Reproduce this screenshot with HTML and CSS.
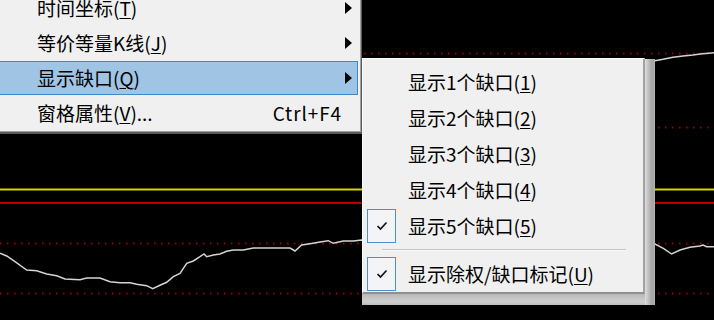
FILE: index.html
```html
<!DOCTYPE html>
<html lang="zh-CN">
<head>
<meta charset="utf-8">
<title>显示缺口</title>
<link rel="stylesheet" href="styles.css">
</head>
<body>
<div class="stage">
  <svg class="chart" width="714" height="320" viewBox="0 0 714 320">
    <g class="dots">
      <line x1="0" y1="53.5" x2="714" y2="53.5"/>
      <line x1="0" y1="127.5" x2="714" y2="127.5"/>
      <line x1="0" y1="243.5" x2="714" y2="243.5"/>
      <line x1="0" y1="293.5" x2="714" y2="293.5"/>
    </g>
    <line class="yellow" x1="0" y1="189.5" x2="714" y2="189.5"/>
    <line class="red" x1="0" y1="203" x2="714" y2="203"/>
    <polyline class="price" points="0,253.3 6.7,256 15,261.7 26.7,270 36.7,270.7 46.7,274 56.7,275.7 65,279 80,279.7 86.7,278 100,278 110,281.7 120,282.7 130,282.7 136.7,284.3 146.7,285.7 152.7,288.7 160,285.3 166.7,282.3 173.3,276.7 180,273.3 186.7,263.3 193.3,261 200,256.7 204,254 206.7,256.7 213.3,255 220,254 226.7,251.3 233.3,250 243.3,250 253.3,248 266.7,248 290,248 295,251 301.7,245 310,243.7 320,242 328.3,240.7 333.3,243.3 343.3,241 353.3,241 361.7,240 655,244 663.3,248.3 671.7,254 680,250 690,247.3 700,246 703,245 706.7,246.7 714,246.7"/>
    <polyline class="price" points="600,66 655,60.7 663,59.3 673,57.3 683,56 693,55 700,54 714,52.7"/>
  </svg>

  <div class="menu main">
    <div class="item"><span class="label">时间坐标(<u>T</u>)</span><span class="key"></span><span class="arrow"></span></div>
    <div class="item"><span class="label">等价等量K线(<u>J</u>)</span><span class="key"></span><span class="arrow"></span></div>
    <div class="item active"><span class="label">显示缺口(<u>Q</u>)</span><span class="key"></span><span class="arrow"></span></div>
    <div class="item"><span class="label">窗格属性(<u>V</u>)...</span><span class="key">Ctrl+F4</span><span class="noarrow"></span></div>
  </div>

  <div class="menu sub">
    <div class="sitem"><span class="check"></span><span class="label">显示1个缺口(<u>1</u>)</span></div>
    <div class="sitem"><span class="check"></span><span class="label">显示2个缺口(<u>2</u>)</span></div>
    <div class="sitem"><span class="check"></span><span class="label">显示3个缺口(<u>3</u>)</span></div>
    <div class="sitem"><span class="check"></span><span class="label">显示4个缺口(<u>4</u>)</span></div>
    <div class="sitem"><span class="check on"><svg width="12" height="10" viewBox="0 0 12 10"><path d="M1.5 5 L4.5 8 L10.5 1.5" fill="none" stroke="#111" stroke-width="1.7"/></svg></span><span class="label">显示5个缺口(<u>5</u>)</span></div>
    <div class="sep"></div>
    <div class="sitem"><span class="check on"><svg width="12" height="10" viewBox="0 0 12 10"><path d="M1.5 5 L4.5 8 L10.5 1.5" fill="none" stroke="#111" stroke-width="1.7"/></svg></span><span class="label">显示除权/缺口标记(<u>U</u>)</span></div>
  </div>
</div>
</body>
</html>
```

FILE: styles.css
```css
html, body {
  margin: 0;
  padding: 0;
  background: #000;
  overflow: hidden;
}

.stage {
  position: relative;
  width: 714px;
  height: 320px;
  overflow: hidden;
  background: #000;
  font-family: "Noto Sans CJK SC", "Noto Sans", sans-serif;
  font-size: 19px;
  color: #000;
}

.chart {
  position: absolute;
  left: 0;
  top: 0;
}

.dots line {
  stroke: #9a0000;
  stroke-width: 2;
  stroke-dasharray: 1.5 5.5;
}

.yellow {
  stroke: #d6d600;
  stroke-width: 2;
}

.red {
  stroke: #b80000;
  stroke-width: 2;
}

.price {
  fill: none;
  stroke: #d4d4d4;
  stroke-width: 1.5;
}

.menu {
  position: absolute;
  box-sizing: border-box;
  background: #f0f0f0;
}

/* main context menu */
.main {
  left: -24px;
  top: -12px;
  width: 385px;
  padding: 2px 2px 0 2px;
  border-right: 1px solid #a0a0a0;
  border-bottom: 1px solid #a0a0a0;
  box-shadow: 1px 2px 0 #5a5a5a;
}

.item {
  box-sizing: border-box;
  height: 34px;
  margin: 1px 0;
  display: grid;
  grid-template-columns: 1fr auto 15px;
  align-items: center;
  border: 1px solid transparent;
}

.item .label {
  padding-left: 58px;
  padding-bottom: 2px;
  white-space: nowrap;
}

.item .key {
  padding-bottom: 2px;
  letter-spacing: 0.9px;
}

.item.active {
  background: #a0c4e4;
  border-color: #3f88cc;
}

.arrow {
  justify-self: start;
  margin-left: 3px;
  width: 0;
  height: 0;
  border-top: 6.5px solid transparent;
  border-bottom: 6.5px solid transparent;
  border-left: 7px solid #000;
}

/* submenu */
.sub {
  left: 362px;
  top: 58px;
  width: 283px;
  padding: 5px 2px 0 2px;
  border-left: 1px solid #fbfbfb;
  border-top: 1px solid #fbfbfb;
  border-right: 2px solid #a2a2a2;
  border-bottom: 2px solid #909090;
}

.sub::before {
  content: "";
  position: absolute;
  top: 0;
  right: -12px;
  width: 10px;
  bottom: -13px;
  background: linear-gradient(to right, #dedede 0, #c4c4c4 3px, #ababab 6px, #a4a4a4 8px, #b8b8b8 10px);
}

.sub::after {
  content: "";
  position: absolute;
  left: -1px;
  right: -2px;
  bottom: -13px;
  height: 11px;
  background: linear-gradient(to bottom, #b8b8b8 0, #c6c6c6 4px, #cfcfcf 8px, #bdbdbd 11px);
}

.sitem {
  height: 36px;
  display: flex;
  align-items: center;
}

.sitem .label {
  padding-bottom: 2px;
  white-space: nowrap;
}

.check {
  box-sizing: border-box;
  width: 29px;
  height: 34px;
  margin-left: 2px;
  margin-right: 12px;
  display: flex;
  align-items: center;
  justify-content: center;
  border: 1.5px solid transparent;
}

.check.on {
  border-color: #4a90d2;
  background: #f2f4f7;
}

.sep {
  height: 12px;
  display: flex;
  align-items: center;
  padding: 0 15px 0 17px;
}

.sep::before {
  content: "";
  flex: 1;
  height: 1px;
  background: #c4c4c4;
  border-bottom: 1px solid #fafafa;
}

u {
  text-decoration: underline;
  text-underline-offset: 2px;
  text-decoration-thickness: 1px;
}
```
